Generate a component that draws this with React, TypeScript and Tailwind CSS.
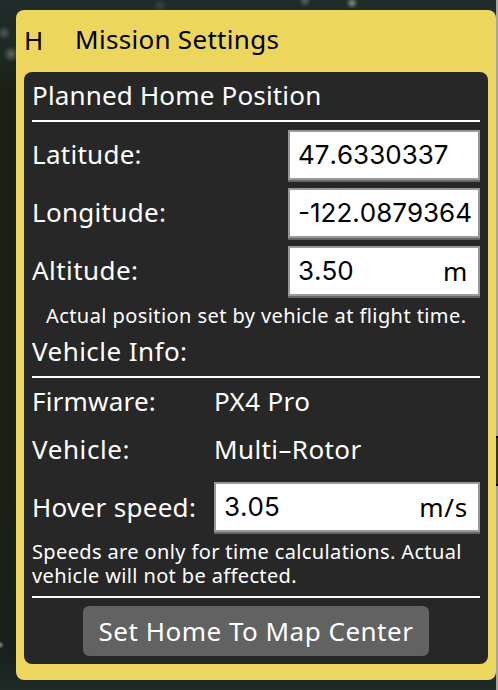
import type { ReactNode } from "react";

const label = "text-[26px] leading-[36px] whitespace-nowrap";

function Rule() {
  return <div className="h-[2px] shrink-0 bg-white" />;
}

function Field({ value, unit, width }: { value: string; unit?: string; width: string }) {
  return (
    <div
      className={`${width} flex h-[50px] shrink-0 items-center justify-between border-2 border-[#999] bg-white pl-[8px] pr-[10px] text-black shadow-[0_2px_0_#666]`}
    >
      <span className="font-['Inter',sans-serif] text-[26px] leading-[36px] tracking-[0px] whitespace-nowrap [font-kerning:none]">{value}</span>
      {unit && <span className="text-[26px] leading-[36px] tracking-[0.8px]">{unit}</span>}
    </div>
  );
}

function FieldRow({ name, children }: { name: ReactNode; children: ReactNode }) {
  return (
    <div className="flex h-[50px] items-center justify-between">
      {name}
      {children}
    </div>
  );
}

export default function App() {
  return (
    <div className="flex h-[690px] w-[498px] overflow-hidden bg-[radial-gradient(circle_at_352px_3px,#7d8b7c_0px,transparent_6px),radial-gradient(circle_at_305px_1px,#56655c_0px,transparent_6px),radial-gradient(circle_at_160px_6px,#34444a_0px,transparent_7px),radial-gradient(circle_at_4px_33px,#4d5a57_0px,transparent_7px),radial-gradient(circle_at_11px_54px,#5b6762_0px,transparent_8px),radial-gradient(circle_at_0px_645px,#7d919a_0px,transparent_4px),linear-gradient(180deg,#202c2a_0px,#1d2822_60px,#1a2013_90px,#1b2014_480px,#17201b_650px,#1f2b27_690px)] font-['Noto_Sans',sans-serif]">
      <div className="mt-[10px] ml-[16px] flex h-[670px] w-[480px] shrink-0 flex-col rounded-[8px] bg-[#ecd65e] px-[8px] pb-[16px]">
        <div className="flex h-[62px] shrink-0 items-center text-black">
          <span className="w-[51px] pb-[2px] text-[26px] leading-[36px]">H</span>
          <span className={`${label} pb-[5px] tracking-[0.3px]`}>Mission Settings</span>
        </div>
        <div className="flex flex-1 flex-col rounded-[8px] bg-[#272727] px-[8px] text-white">
          <div className={`${label} h-[48px] pt-[5px] tracking-[0.17px]`}>Planned Home Position</div>
          <Rule />
          <div className="mt-[8px] flex flex-col gap-[8px]">
            <FieldRow name={<span className={`${label} pb-[2px] tracking-[0.27px]`}>Latitude:</span>}>
              <Field value="47.6330337" width="w-[192px]" />
            </FieldRow>
            <FieldRow name={<span className={`${label} pb-[2px] tracking-[0.3px]`}>Longitude:</span>}>
              <Field value="-122.0879364" width="w-[192px]" />
            </FieldRow>
            <FieldRow name={<span className={`${label} pb-[2px] tracking-[0.45px]`}>Altitude:</span>}>
              <Field value="3.50" unit="m" width="w-[192px]" />
            </FieldRow>
          </div>
          <div className="h-[36px] pt-[8px] pl-[14px] text-[20px] leading-[24px] tracking-[0.42px] whitespace-nowrap">
            Actual position set by vehicle at flight time.
          </div>
          <div className={`${label} h-[44px] pt-[1px] tracking-[0.45px]`}>Vehicle Info:</div>
          <Rule />
          <div className="flex h-[48px] items-center pb-[2px]">
            <span className={`${label} w-[182px] tracking-[0.2px]`}>Firmware:</span>
            <span className={`${label} tracking-[0.35px]`}>PX4 Pro</span>
          </div>
          <div className="flex h-[48px] items-center pb-[2px]">
            <span className={`${label} w-[182px] tracking-[0.6px]`}>Vehicle:</span>
            <span className={`${label} tracking-[0.4px]`}>Multi–Rotor</span>
          </div>
          <div className="mt-[8px]">
            <FieldRow name={<span className={`${label} tracking-[0.3px]`}>Hover speed:</span>}>
              <Field value="3.05" unit="m/s" width="w-[266px]" />
            </FieldRow>
          </div>
          <div className="flex h-[64px] flex-col pt-[8px] text-[20px] leading-[24px] tracking-[0.37px] whitespace-nowrap">
            <span>Speeds are only for time calculations. Actual</span>
            <span>vehicle will not be affected.</span>
          </div>
          <Rule />
          <button className="mt-[8px] ml-[51px] flex h-[50px] w-[346px] items-center justify-center rounded-[6px] bg-[#626262] text-[26px] leading-[36px] tracking-[0.5px] whitespace-nowrap">
            Set Home To Map Center
          </button>
        </div>
      </div>
      <div className="flex w-[2px] flex-col bg-[#a5a5a5]">
        <div className="mt-[436px] h-[50px] border-y-2 border-black bg-[#333]" />
      </div>
    </div>
  );
}
